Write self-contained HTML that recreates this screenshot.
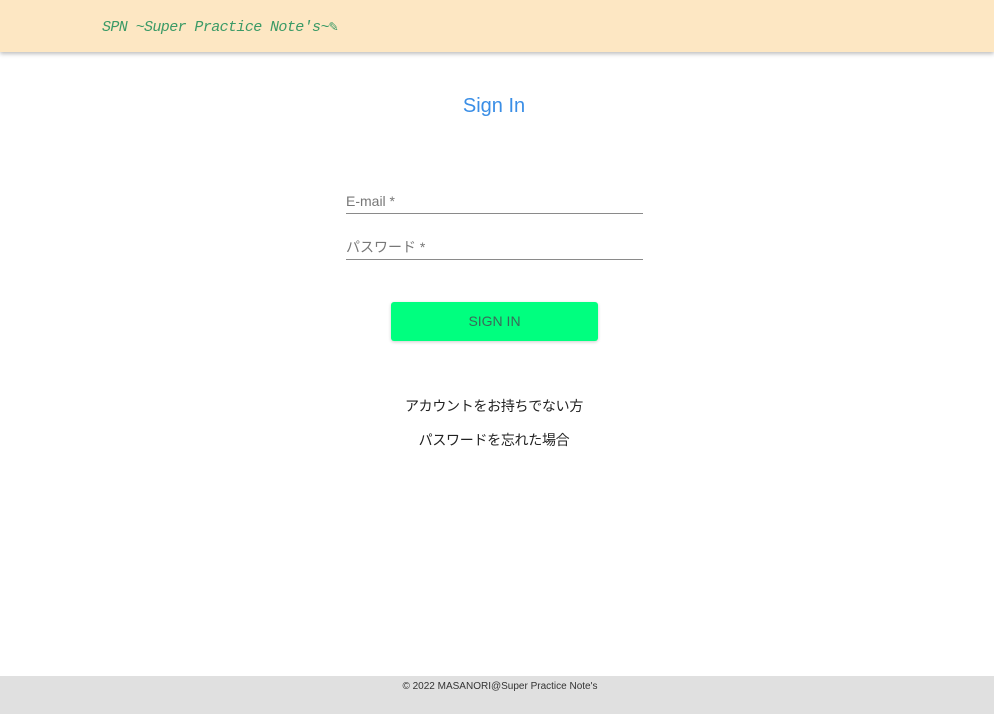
<!DOCTYPE html>
<html><head><meta charset="utf-8"><style>
body{margin:0;width:994px;height:714px;position:relative;background:#fff;font-family:"Liberation Sans","Noto Sans CJK JP",sans-serif;overflow:hidden}
.hdr{position:absolute;left:0;top:0;width:994px;height:52px;background:#fde7c3;box-shadow:0 2px 4px rgba(0,0,0,.25)}
.logo{position:absolute;left:102px;top:17px;font-family:"Liberation Mono",monospace;font-style:italic;font-size:15px;color:#3a9a66;letter-spacing:-0.6px}
h1{position:absolute;top:95px;left:0;width:988px;text-align:center;margin:0;font-weight:normal;font-size:20px;color:#3a8ee6}
.f{position:absolute;left:346px;width:297px;border-bottom:1px solid #8a8a8a;color:#777;font-size:14px;padding-bottom:4px;line-height:16px}
.btn{position:absolute;left:391px;top:302px;width:207px;height:39px;background:#00ff7f;border-radius:3px;box-shadow:0 1px 3px rgba(0,0,0,.2);text-align:center;line-height:39px;color:#3a6a5a;font-size:14px}
.l{position:absolute;left:0;width:988px;text-align:center;font-size:14px;color:#222;letter-spacing:-0.3px}
.ft{position:absolute;left:0;top:676px;width:988px;height:38px;background:#e0e0e0;text-align:center;font-size:10px;color:#333;line-height:22px;padding-left:6px}
</style></head><body>
<div class="hdr"><div class="logo">SPN ~Super Practice Note's~<span style="font-style:normal;color:#3a9a66">✎</span></div></div>
<h1>Sign In</h1>
<div class="f" style="top:193px">E-mail *</div>
<div class="f" style="top:239px">パスワード *</div>
<div class="btn">SIGN IN</div>
<div class="l" style="top:396px">アカウントをお持ちでない方</div>
<div class="l" style="top:430px">パスワードを忘れた場合</div>
<div class="ft">© 2022 MASANORI@Super Practice Note's</div>
</body></html>
